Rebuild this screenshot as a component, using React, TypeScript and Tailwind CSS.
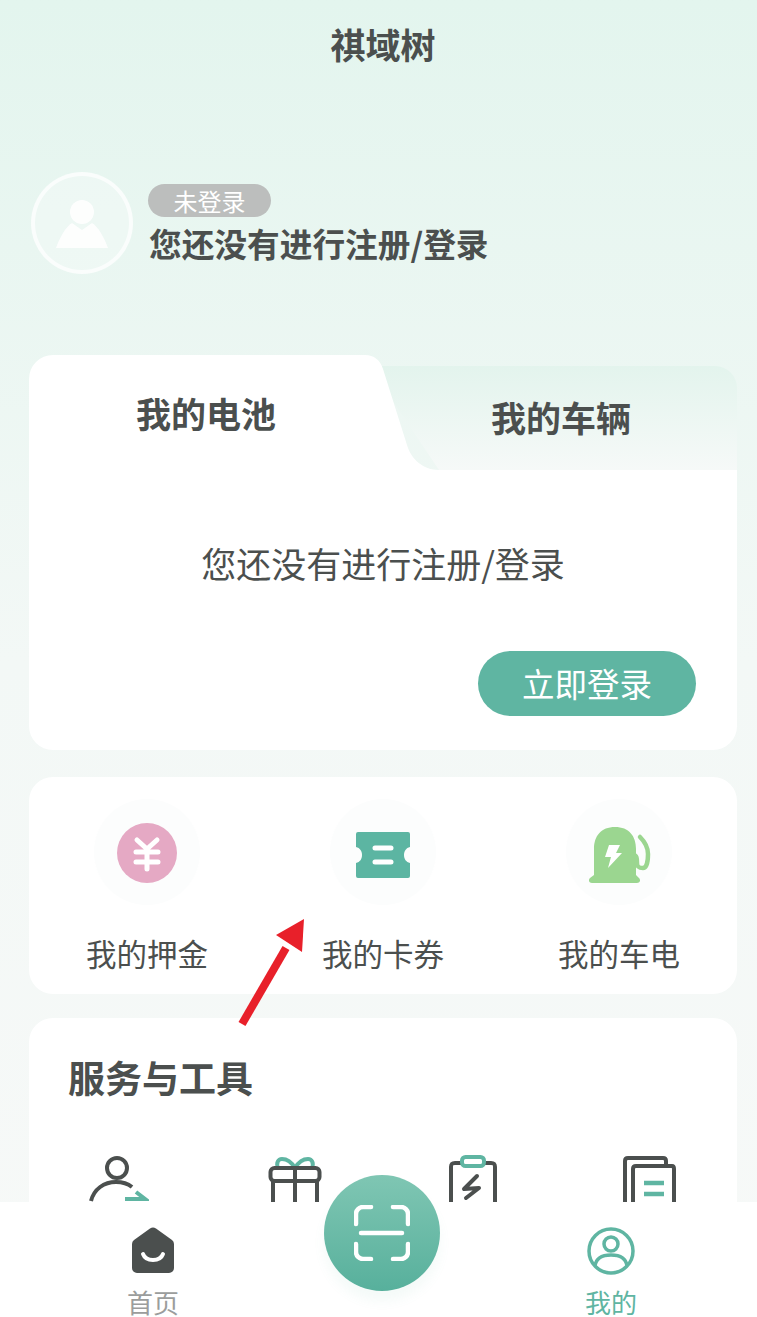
const cjk = "font-['Noto_Sans_CJK_SC','Noto_Sans',sans-serif]";

function UserTransferIcon() {
  return (
    <svg width="60" height="48" viewBox="0 0 60 48" fill="none" className="block">
      <circle cx="28" cy="13" r="10" stroke="#4b4f4e" strokeWidth="4" />
      <path d="M2 46c3-12 13-19 25-19 6 0 11 1 16 5" stroke="#4b4f4e" strokeWidth="4" />
      <path d="M36 44h20l-9-7" stroke="#5fb5a2" strokeWidth="4" />
    </svg>
  );
}

function GiftIcon() {
  return (
    <svg width="54" height="48" viewBox="0 0 54 48" fill="none" className="block">
      <path d="M27 13c-3-5-8-9-13-9-4 0-6 4-4 9M27 13c3-5 8-9 13-9 4 0 6 4 4 9" stroke="#5fb5a2" strokeWidth="4" />
      <rect x="2.500" y="13" width="49" height="13" rx="4" stroke="#4b4f4e" strokeWidth="4" />
      <path d="M5 26v22M27 13v35M49 26v22" stroke="#4b4f4e" strokeWidth="4" />
    </svg>
  );
}

function BatteryClipIcon() {
  return (
    <svg width="50" height="48" viewBox="0 0 50 48" fill="none" className="block">
      <path d="M3 48V12c0-3 1-4 4-4h36c3 0 4 1 4 4v36" stroke="#4b4f4e" strokeWidth="4" />
      <rect x="14" y="2" width="22" height="9" rx="3.500" fill="#fff" stroke="#5fb5a2" strokeWidth="4" />
      <path d="M29 21L16 34l15-1-13 10" stroke="#4b4f4e" strokeWidth="4" strokeLinecap="round" strokeLinejoin="round" />
    </svg>
  );
}

function DocsIcon() {
  return (
    <svg width="54" height="48" viewBox="0 0 54 48" fill="none" className="block">
      <path d="M3 48V6c0-2 1-3 3-3h35c2 0 3 1 3 3v4" stroke="#4b4f4e" strokeWidth="4" />
      <path d="M11 48V14c0-2 1-3 3-3h36c1 0 2 1 2 3v34" fill="#fff" stroke="#4b4f4e" strokeWidth="4" />
      <path d="M22 28h20M22 39h20" stroke="#5fb5a2" strokeWidth="4.500" />
    </svg>
  );
}

function YuanIcon() {
  return (
    <svg width="62" height="62" viewBox="0 0 62 62" className="block mt-[2px]">
      <circle cx="31" cy="31" r="30" fill="#e5a9c4" />
      <path d="M21 18l10 9 10-9M20 30h22M20 40h22M31 28v19" fill="none" stroke="#fff" strokeWidth="5" strokeLinecap="round" strokeLinejoin="round" />
    </svg>
  );
}

function TicketIcon() {
  return (
    <svg width="56" height="48" viewBox="0 0 56 48" className="block mt-[5px]">
      <path d="M3 1h50a2 2 0 0 1 2 2v13c-4 1-6 4-6 8s2 7 6 8v13a2 2 0 0 1-2 2H3a2 2 0 0 1-2-2V32c4-1 6-4 6-8s-2-7-6-8V3a2 2 0 0 1 2-2z" fill="#5cb5a2" />
      <path d="M20 17h16M20 31h16" stroke="#fff" strokeWidth="5" strokeLinecap="round" />
    </svg>
  );
}

function ChargerIcon() {
  return (
    <svg width="66" height="60" viewBox="0 0 66 60" fill="none" className="block mt-[5px]">
      <path d="M8 50V24C8 11 15 2 29 2s21 9 21 22v26l3 3c2 2 1 5-2 5H6c-3 0-4-3-2-5z" fill="#9bd690" />
      <path d="M54 12c5 5 8 10 8 17 0 6-1 14-5 14s-6-1-6-5c0-4 0-8-4-8" stroke="#9bd690" strokeWidth="4.500" strokeLinecap="round" />
      <path d="M23 20h11l-4 8h6L22 43l3-11h-6z" fill="#fff" strokeLinejoin="round" />
    </svg>
  );
}

function ScanIcon() {
  return (
    <svg width="56" height="56" viewBox="0 0 56 56" fill="none" className="block">
      <path d="M17 2H9a7 7 0 0 0-7 7v10M39 2h8a7 7 0 0 1 7 7v10M17 54H9a7 7 0 0 1-7-7V39M39 54h8a7 7 0 0 0 7-7V39" stroke="#fff" strokeWidth="4.500" strokeLinecap="round" />
      <path d="M7 28h41" stroke="#fff" strokeWidth="4.500" strokeLinecap="round" />
    </svg>
  );
}

function HomeIcon() {
  return (
    <svg width="42" height="46" viewBox="0 0 42 46" className="block">
      <path d="M18 1.500a5 5 0 0 1 6 0L40 13a5 5 0 0 1 2 4v24a5 5 0 0 1-5 5H5a5 5 0 0 1-5-5V17a5 5 0 0 1 2-4z" fill="#4b4f4e" />
      <path d="M11 27c3 8 17 8 20 0" fill="none" stroke="#fff" strokeWidth="4" strokeLinecap="round" />
    </svg>
  );
}

function MeIcon() {
  return (
    <svg width="48" height="48" viewBox="0 0 48 48" fill="none" className="block">
      <circle cx="24" cy="24" r="22" stroke="#5fb5a2" strokeWidth="3.500" />
      <circle cx="24" cy="17" r="7" stroke="#5fb5a2" strokeWidth="3.500" />
      <path d="M8 39c1-8 8-11 16-11s15 3 16 11" stroke="#5fb5a2" strokeWidth="3.500" />
    </svg>
  );
}

function QuickItem({ label, children }: { label: string; children: React.ReactNode }) {
  return (
    <div className="flex flex-col items-center w-[236px]">
      <div className="w-[106px] h-[106px] rounded-full bg-[#fcfdfd] flex items-center justify-center">
        {children}
      </div>
      <span className="mt-[26px] text-[30.500px] leading-[44px] text-[#4b4f4e]">{label}</span>
    </div>
  );
}

export default function App() {
  return (
    <div className={`${cjk} relative w-[757px] h-[1317px] overflow-hidden flex flex-col bg-gradient-to-b from-[#e3f5ee] via-[#f3f8f6] via-50% to-[#f7f9f8]`}>
      <main className="flex-1 min-h-0 overflow-hidden">
        <h1 className="pt-[19px] pl-[9px] text-center text-[35px] leading-[50px] font-bold text-[#4b4f4e]">祺域树</h1>

        <section className="mt-[103px] ml-[31px] flex items-center">
          <div className="w-[102px] h-[102px] rounded-full border-[4px] border-white/70 bg-white/25 flex items-center justify-center">
            <svg width="52" height="50" viewBox="0 0 52 50" className="block opacity-90">
              <circle cx="26" cy="14" r="12" fill="#fff" />
              <path d="M16 25l10 7 10-7c6 3 13 16 16 25H0c3-9 10-22 16-25z" fill="#fff" />
            </svg>
          </div>
          <div className="ml-[15px] mt-[6px]">
            <div className="w-[123px] h-[33px] rounded-full bg-[#bcbebd] text-center text-[24px] leading-[33px] text-white">未登录</div>
            <p className="mt-[1px] ml-[1px] text-[32.700px] leading-[50px] font-bold text-[#4b4f4e] whitespace-nowrap">您还没有进行注册/登录</p>
          </div>
        </section>

        <section className="mt-[81px] mx-[29px] w-[708px]">
          <div className="relative h-[115px] flex">
            <svg width="708" height="115" viewBox="0 0 708 115" className="absolute inset-0 block">
              <defs>
                <linearGradient id="tabBg" x1="0" y1="0" x2="0" y2="1">
                  <stop offset="0" stopColor="#e3f4ed" />
                  <stop offset="1" stopColor="#f6f9f8" />
                </linearGradient>
              </defs>
              <path d="M340 11H686a22 22 0 0 1 22 22V115H410z" fill="url(#tabBg)" />
              <path d="M0 115V24A24 24 0 0 1 24 0H336c9 0 15 5 18 14l24 76c4 14 16 25 32 25z" fill="#fff" />
            </svg>
            <div className="relative w-[354px] pt-[33px] text-center text-[35px] leading-[50px] font-bold text-[#4b4f4e]">我的电池</div>
            <div className="relative flex-1 pt-[37px] pl-[2px] text-center text-[35px] leading-[50px] font-bold text-[#4b4f4e]">我的车辆</div>
          </div>
          <div className="h-[280px] bg-white rounded-b-[24px] pt-[68px] flex flex-col">
            <p className="text-center text-[35px] leading-[50px] text-[#4b4f4e]">您还没有进行注册/登录</p>
            <button type="button" className="self-end mt-[63px] mr-[41px] w-[218px] h-[65px] rounded-full bg-[#5fb5a2] text-[32.500px] text-white">立即登录</button>
          </div>
        </section>

        <section className="mt-[27px] mx-[29px] w-[708px] h-[217px] bg-white rounded-[24px] flex pt-[22px]">
          <QuickItem label="我的押金"><YuanIcon /></QuickItem>
          <QuickItem label="我的卡券"><TicketIcon /></QuickItem>
          <QuickItem label="我的车电"><ChargerIcon /></QuickItem>
        </section>

        <section className="mt-[24px] mx-[29px] w-[708px] h-[400px] bg-white rounded-[24px] pl-[39px] pt-[32px]">
          <h2 className="text-[37px] leading-[54px] font-bold text-[#4b4f4e]">服务与工具</h2>
          <div className="mt-[51px] flex items-start">
            <div className="ml-[21px]"><UserTransferIcon /></div>
            <div className="ml-[119px]"><GiftIcon /></div>
            <div className="ml-[126px]"><BatteryClipIcon /></div>
            <div className="ml-[124px]"><DocsIcon /></div>
          </div>
        </section>
      </main>

      <nav className="relative shrink-0 h-[115px] bg-white flex">
        <button type="button" className="absolute left-[324px] -top-[27px] w-[116px] h-[116px] rounded-full bg-gradient-to-b from-[#7fc6b3] to-[#57b09c] shadow-[0_10px_12px_rgba(95,181,162,0.07)] flex items-center justify-center">
          <ScanIcon />
        </button>
        <div className="w-[306px] flex flex-col items-center pt-[25px]">
          <HomeIcon />
          <span className="text-[26px] leading-[30px] mt-[14px] text-[#9b9d9c]">首页</span>
        </div>
        <div className="ml-auto w-[306px] mr-[-7px] flex flex-col items-center pt-[25px]">
          <MeIcon />
          <span className="text-[26px] leading-[30px] mt-[12px] text-[#5fb5a2]">我的</span>
        </div>
      </nav>

      {/* red arrow drawn over the screenshot */}
      <svg width="72" height="114" viewBox="0 0 72 114" fill="none" className="absolute left-[236px] top-[916px] block">
        <path d="M6 108L50 32" stroke="#e8202a" strokeWidth="8" />
        <path d="M68 3L40 19 66 36z" fill="#e8202a" />
      </svg>
    </div>
  );
}
